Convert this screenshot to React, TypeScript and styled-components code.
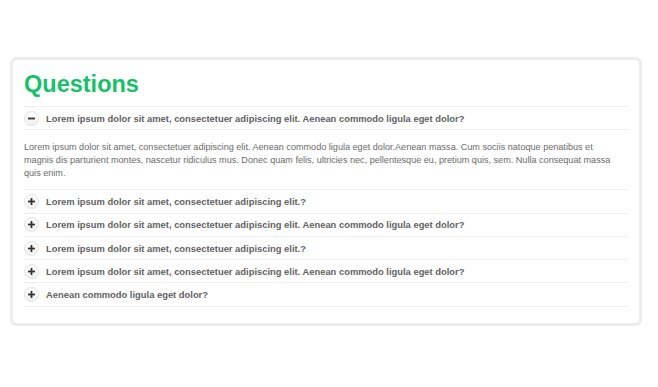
import React, { useState } from 'react'
import styled, { createGlobalStyle } from 'styled-components'

const GlobalStyle = createGlobalStyle`
  body {
    margin: 0;
    background: #fff;
    font-family: "Liberation Sans", Arial, sans-serif;
  }
`

const Page = styled.div`
  padding: 57px 16px 0 10px;
`

const Card = styled.div`
  width: 632px;
  height: 269px;
  box-sizing: border-box;
  border: 3px solid #ececec;
  border-radius: 7px;
  padding: 0 11px;
  background: #fff;
`

const Title = styled.h1`
  margin: 0;
  padding: 10.5px 0 8.5px;
  font-size: 23.5px;
  line-height: 27px;
  font-weight: bold;
  color: #18c06a;
`

const List = styled.div`
  border-bottom: 1px solid #eee;
`

const Item = styled.div`
  border-top: 1px solid #eee;
`

const Head = styled.div`
  display: flex;
  align-items: center;
  gap: 7px;
  height: 22.3px;
  cursor: pointer;
  font-size: 9.4px;
  font-weight: bold;
  color: #626262;
`

const Toggle = styled.span`
  width: 13px;
  height: 13px;
  border-radius: 50%;
  border: 1px solid #e2e2e2;
  background: linear-gradient(#fff, #f1f1f1);
  display: flex;
  align-items: center;
  justify-content: center;
  flex: none;
`

const Body = styled.div`
  border-top: 1px solid #eee;
  padding: 11px 5.5px 9px 0;
  font-size: 9.1px;
  line-height: 13px;
  color: #6a6a6a;
`

const questions = [
  {
    q: 'Lorem ipsum dolor sit amet, consectetuer adipiscing elit. Aenean commodo ligula eget dolor?',
    a: 'Lorem ipsum dolor sit amet, consectetuer adipiscing elit. Aenean commodo ligula eget dolor.Aenean massa. Cum sociis natoque penatibus et magnis dis parturient montes, nascetur ridiculus mus. Donec quam felis, ultricies nec, pellentesque eu, pretium quis, sem. Nulla consequat massa quis enim.',
  },
  { q: 'Lorem ipsum dolor sit amet, consectetuer adipiscing elit.?', a: '' },
  { q: 'Lorem ipsum dolor sit amet, consectetuer adipiscing elit. Aenean commodo ligula eget dolor?', a: '' },
  { q: 'Lorem ipsum dolor sit amet, consectetuer adipiscing elit.?', a: '' },
  { q: 'Lorem ipsum dolor sit amet, consectetuer adipiscing elit. Aenean commodo ligula eget dolor?', a: '' },
  { q: 'Aenean commodo ligula eget dolor?', a: '' },
]

function Icon({ open }: { open: boolean }) {
  return (
    <svg width="9" height="9" viewBox="0 0 9 9">
      <rect x="1" y="3.6" width="7" height="1.8" fill="#333" />
      {!open && <rect x="3.6" y="1" width="1.8" height="7" fill="#333" />}
    </svg>
  )
}

export default function App() {
  const [openIndex, setOpenIndex] = useState(0)

  return (
    <Page>
      <GlobalStyle />
      <Card>
        <Title>Questions</Title>
        <List>
          {questions.map((item, i) => (
            <Item key={i}>
              <Head onClick={() => setOpenIndex(openIndex === i ? -1 : i)}>
                <Toggle>
                  <Icon open={openIndex === i} />
                </Toggle>
                {item.q}
              </Head>
              {openIndex === i && <Body>{item.a || 'Lorem ipsum dolor sit amet.'}</Body>}
            </Item>
          ))}
        </List>
      </Card>
    </Page>
  )
}
